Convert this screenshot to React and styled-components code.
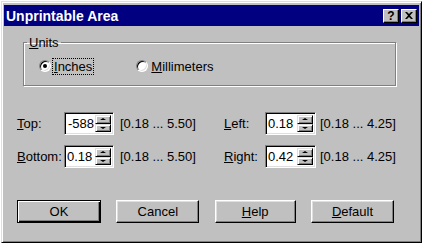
import styled, { createGlobalStyle } from "styled-components";

const Global = createGlobalStyle`
  html, body { margin: 0; padding: 0; background: #ffffff; }
  body { font-family: "Liberation Sans", Arial, sans-serif; font-size: 13px; color: #000; }
`;

const Window = styled.div`
  margin: 1px;
  width: 421px;
  height: 242px;
  box-sizing: border-box;
  background: #c0c0c0;
  border: 1px solid;
  border-color: #dfdfdf #000000 #000000 #dfdfdf;
  box-shadow: inset 1px 1px 0 #ffffff, inset -1px -1px 0 #808080;
  padding: 2px;
  display: flex;
  flex-direction: column;
`;

const TitleBar = styled.div`
  height: 21px;
  margin-top: 1px;
  background: #000080;
  display: flex;
  align-items: center;
  padding: 0 2px 0 2px;
`;

const Title = styled.div`
  flex: 1;
  color: #ffffff;
  font-weight: bold;
  font-size: 14px;
`;

const TitleButton = styled.div`
  width: 16px;
  height: 14px;
  margin-left: ${({ gap }) => gap || 0}px;
  box-sizing: border-box;
  background: #c0c0c0;
  border: 1px solid;
  border-color: #ffffff #000000 #000000 #ffffff;
  box-shadow: inset -1px -1px 0 #808080;
  display: flex;
  align-items: center;
  justify-content: center;
  font-weight: bold;
  font-size: 12px;
  line-height: 1;
`;

const Body = styled.div`
  flex: 1;
  padding: 9px 21px 0 13px;
  display: flex;
  flex-direction: column;
`;

const Group = styled.fieldset`
  margin: 0 2px 0 6px;
  padding: 8px 0 0 0;
  height: 51px;
  box-sizing: border-box;
  border: 1px solid #808080;
  box-shadow: 1px 1px 0 #ffffff, inset 1px 1px 0 #ffffff;
  & legend {
    padding: 0 2px;
    margin-left: 3px;
  }
`;

const Options = styled.div`
  display: flex;
  gap: 43px;
  padding-left: 15px;
`;

const Radio = styled.label`
  display: flex;
  align-items: center;
  height: 16px;
`;

const RadioDot = styled.span`
  width: 12px;
  height: 12px;
  box-sizing: border-box;
  border-radius: 50%;
  background: #ffffff;
  border: 1px solid;
  border-color: #808080 #ffffff #ffffff #808080;
  box-shadow: inset 1px 1px 0 #000000, inset -1px -1px 0 #dfdfdf;
  display: flex;
  align-items: center;
  justify-content: center;
  margin-right: 2px;
  &::after {
    content: "";
    width: 4px;
    height: 4px;
    border-radius: 50%;
    background: ${({ on }) => (on ? "#000000" : "transparent")};
  }
`;

const RadioText = styled.span`
  padding: 0 1px;
  outline: ${({ focus }) => (focus ? "1px dotted #000" : "none")};
`;

const U = styled.span`
  text-decoration: underline;
`;

const Fields = styled.div`
  margin-top: 26px;
  display: grid;
  grid-template-columns: 47px 50px 110px 41px 51px auto;
  row-gap: 10px;
  align-items: center;
`;

const Label = styled.div``;

const Range = styled.div`
  padding-left: ${({ pad }) => pad}px;
`;

const Spin = styled.div`
  height: 23px;
  box-sizing: border-box;
  background: #ffffff;
  border: 1px solid;
  border-color: #808080 #ffffff #ffffff #808080;
  box-shadow: inset 1px 1px 0 #000000, inset -1px -1px 0 #dfdfdf;
  display: flex;
  padding: 2px;
`;

const SpinValue = styled.div`
  flex: 1;
  padding-left: ${({ pad }) => pad}px;
  font-size: 13px;
  line-height: 17px;
`;

const Arrows = styled.div`
  width: 16px;
  display: flex;
  flex-direction: column;
`;

const Arrow = styled.div`
  flex: 1;
  box-sizing: border-box;
  background: #c0c0c0;
  border: 1px solid;
  border-color: #dfdfdf #000000 #000000 #dfdfdf;
  box-shadow: inset 1px 1px 0 #ffffff, inset -1px -1px 0 #808080;
  display: flex;
  align-items: center;
  justify-content: center;
  &::after {
    content: "";
    border-left: 3px solid transparent;
    border-right: 3px solid transparent;
    ${({ down }) =>
      down ? "border-top: 2px solid #000;" : "border-bottom: 2px solid #000;"}
  }
`;

const Buttons = styled.div`
  margin-top: 32px;
  display: flex;
  justify-content: space-between;
  padding: 0 4px 0 0;
`;

const Button = styled.div`
  width: ${({ w }) => w}px;
  height: 23px;
  box-sizing: border-box;
  background: #c0c0c0;
  border: 1px solid;
  border-color: ${({ primary }) =>
    primary ? "#000000" : "#ffffff #000000 #000000 #ffffff"};
  box-shadow: ${({ primary }) =>
    primary
      ? "inset 1px 1px 0 #ffffff, inset -1px -1px 0 #000000, inset -2px -2px 0 #808080"
      : "inset -1px -1px 0 #808080, inset 1px 1px 0 #dfdfdf"};
  display: flex;
  align-items: center;
  justify-content: center;
`;

function SpinBox({ value, pad }) {
  return (
    <Spin>
      <SpinValue pad={pad}>{value}</SpinValue>
      <Arrows>
        <Arrow />
        <Arrow down />
      </Arrows>
    </Spin>
  );
}

export default function App() {
  return (
    <>
      <Global />
      <Window>
        <TitleBar>
          <Title>Unprintable Area</Title>
          <TitleButton>?</TitleButton>
          <TitleButton gap={2}>
            <svg width="8" height="7" viewBox="0 0 8 7">
              <path d="M0 0h2l2 2 2-2h2L5 3.5 8 7H6L4 5 2 7H0l3-3.5z" fill="#000" />
            </svg>
          </TitleButton>
        </TitleBar>
        <Body>
          <Group>
            <legend>
              <U>U</U>nits
            </legend>
            <Options>
              <Radio>
                <RadioDot on />
                <RadioText focus>
                  <U>I</U>nches
                </RadioText>
              </Radio>
              <Radio>
                <RadioDot />
                <RadioText>
                  <U>M</U>illimeters
                </RadioText>
              </Radio>
            </Options>
          </Group>
          <Fields>
            <Label>
              <U>T</U>op:
            </Label>
            <SpinBox value="-588" pad={1} />
            <Range pad={6}>[0.18 ... 5.50]</Range>
            <Label>
              <U>L</U>eft:
            </Label>
            <SpinBox value="0.18" pad={0} />
            <Range pad={4}>[0.18 ... 4.25]</Range>
            <Label>
              <U>B</U>ottom:
            </Label>
            <SpinBox value="0.18" pad={0} />
            <Range pad={6}>[0.18 ... 5.50]</Range>
            <Label>
              <U>R</U>ight:
            </Label>
            <SpinBox value="0.42" pad={0} />
            <Range pad={4}>[0.18 ... 4.25]</Range>
          </Fields>
          <Buttons>
            <Button w={84} primary>OK</Button>
            <Button w={83}>Cancel</Button>
            <Button w={81}>
              <U>H</U>elp
            </Button>
            <Button w={83}>
              <U>D</U>efault
            </Button>
          </Buttons>
        </Body>
      </Window>
    </>
  );
}
